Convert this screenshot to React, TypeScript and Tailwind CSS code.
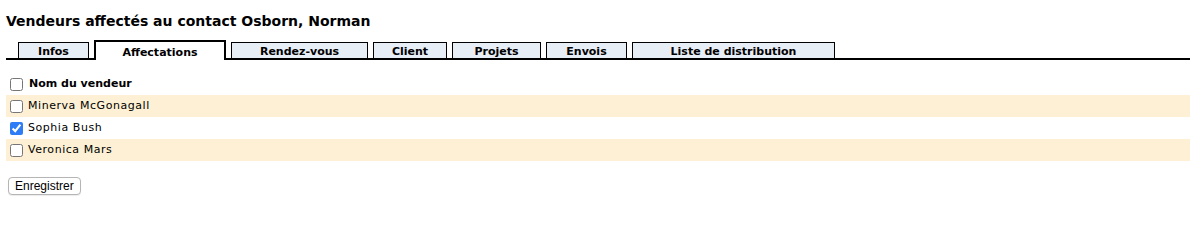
import { useState } from "react";

const tabs = [
  { label: "Infos", width: "w-[71px]" },
  { label: "Affectations", width: "w-[132px]", active: true },
  { label: "Rendez-vous", width: "w-[137px]" },
  { label: "Client", width: "w-[74px]" },
  { label: "Projets", width: "w-[89px]" },
  { label: "Envois", width: "w-[81px]" },
  { label: "Liste de distribution", width: "w-[203px]" },
];

const initialVendors = [
  { id: 1, name: "Minerva McGonagall", checked: false },
  { id: 2, name: "Sophia Bush", checked: true },
  { id: 3, name: "Veronica Mars", checked: false },
];

export default function App() {
  const [vendors, setVendors] = useState(initialVendors);

  const toggle = (id: number) =>
    setVendors(vendors.map(v => (v.id === id ? { ...v, checked: !v.checked } : v)));

  const allChecked = vendors.every(v => v.checked);

  return (
    <div className="min-h-[248px] bg-white px-[6px] pt-[12px] font-['DejaVu_Sans',Verdana,sans-serif] text-[11px] text-black">
      <h1 className="text-[14px] font-bold leading-[18px]">
        Vendeurs affectés au contact Osborn, Norman
      </h1>

      {/* Tabs */}
      <div className="mt-[11px] mr-[8px] flex h-[19px] items-end gap-[5px] border-b-2 border-black pl-[12px]">
        {tabs.map(tab =>
          tab.active ? (
            <div
              key={tab.label}
              className={`${tab.width} -mb-[2px] flex h-[20px] items-center justify-center border-2 border-b-0 border-black bg-white pt-[3px] font-bold leading-none`}
            >
              {tab.label}
            </div>
          ) : (
            <div
              key={tab.label}
              className={`${tab.width} flex h-[16px] items-center justify-center border border-b-0 border-black bg-[#e8eef6] pt-[2px] font-bold leading-none`}
            >
              {tab.label}
            </div>
          )
        )}
      </div>

      {/* Vendor list */}
      <div className="mt-[13px] mr-[8px]">
        <label className="flex h-[22px] items-center gap-[6px] pl-[4px] pt-[1px] font-bold">
          <input
            type="checkbox"
            checked={allChecked}
            onChange={() => setVendors(vendors.map(v => ({ ...v, checked: !allChecked })))}
            className="m-0 h-[13px] w-[13px] accent-[#2e7cf6]"
          />
          Nom du vendeur
        </label>
        {vendors.map((v, i) => (
          <label
            key={v.id}
            className={`flex h-[22px] items-center gap-[5px] pl-[4px] pt-[1px] tracking-[0.55px] ${i % 2 === 0 ? "bg-[#fdf0d4]" : "bg-white"}`}
          >
            <input
              type="checkbox"
              checked={v.checked}
              onChange={() => toggle(v.id)}
              className="m-0 h-[13px] w-[13px] accent-[#2e7cf6]"
            />
            {v.name}
          </label>
        ))}
      </div>

      <button className="mt-[16px] ml-[2px] h-[18px] rounded-[4px] border border-[#b5b5b5] bg-white px-[6px] font-['Liberation_Sans',Arial,sans-serif] text-[12px] leading-none text-black shadow-[0_1px_1px_rgba(0,0,0,0.08)]">
        Enregistrer
      </button>
    </div>
  );
}
